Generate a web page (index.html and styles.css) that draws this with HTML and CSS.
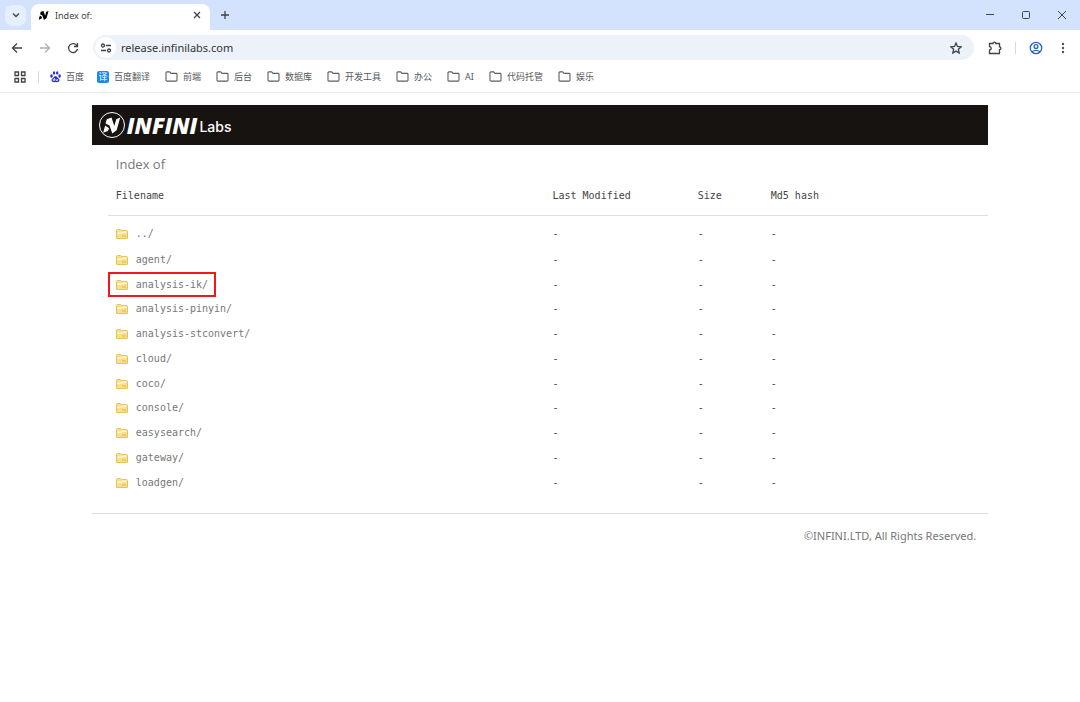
FILE: index.html
```html
<!DOCTYPE html>
<html lang="zh-CN">
<head>
    <meta charset="UTF-8">
    <meta name="viewport" content="width=device-width, initial-scale=1.0">
    <title>Index of:</title>
    <link rel="stylesheet" href="styles.css">
</head>
<body>
    <!-- Shared shapes -->
    <svg class="defs" aria-hidden="true">
        <symbol id="mark" viewBox="0 0 24 24">
            <path d="M1.500 21 4 12 9 15.500 7.500 19zM6 4 12 2 15.500 12.500 18 4 23 2 18.500 18 13 22 9.500 12 4.500 9.500z"/>
        </symbol>
        <symbol id="dir" viewBox="0 0 14 12">
            <path d="M1 10V2q0-1 1-1h3l1.500 1.600H12q1 0 1 1V10q0 1-1 1H2q-1 0-1-1z" fill="none" stroke="#5a5d61" stroke-width="1.200"/>
        </symbol>
        <symbol id="folder" viewBox="0 0 12 10">
            <path d="M.5 9V1.500q0-1 1-1h3l1 1h5q1 0 1 1V9q0 .5-.5.5H1Q.5 9.500.5 9z" fill="#f8df88" stroke="#e6c25c"/>
            <path d="M1.500 3.500h4l1-1h4V4h-4l-1 1h-4z" fill="#fff8dc"/>
            <path d="M6 7h4" stroke="#e0b542"/>
        </symbol>
    </svg>

    <header class="browser">
        <div class="tab-strip">
            <button class="tab-search" aria-label="Search tabs">
                <svg width="8" height="6" viewBox="0 0 8 6"><path d="M1 1.500 4 4.500 7 1.500" class="line"/></svg>
            </button>
            <div class="tab">
                <svg class="favicon" width="11" height="11"><use href="#mark"/></svg>
                <span class="tab-title">Index of:</span>
                <button aria-label="Close tab">
                    <svg width="8" height="8" viewBox="0 0 8 8"><path d="M1 1l6 6M7 1 1 7" class="line"/></svg>
                </button>
            </div>
            <button class="new-tab" aria-label="New tab">
                <svg width="10" height="10" viewBox="0 0 10 10"><path d="M5 1v8M1 5h8" class="line"/></svg>
            </button>
            <div class="window-buttons">
                <button aria-label="Minimize"><svg width="10" height="10" viewBox="0 0 10 10"><path d="M1 4.500h8" class="thin"/></svg></button>
                <button aria-label="Maximize"><svg width="10" height="10" viewBox="0 0 10 10"><rect x="1.500" y="1.500" width="7" height="7" rx="1" class="thin"/></svg></button>
                <button aria-label="Close"><svg width="10" height="10" viewBox="0 0 10 10"><path d="M1 1l8 8M9 1 1 9" class="thin"/></svg></button>
            </div>
        </div>

        <div class="toolbar">
            <button aria-label="Back">
                <svg width="12" height="12" viewBox="0 0 12 12"><path d="M11 6H2M6 1.500 1.500 6 6 10.500" class="line"/></svg>
            </button>
            <button class="disabled" aria-label="Forward">
                <svg width="12" height="12" viewBox="0 0 12 12"><path d="M1 6h9M6 1.500 10.500 6 6 10.500" class="line"/></svg>
            </button>
            <button aria-label="Reload">
                <svg width="12" height="12" viewBox="0 0 12 12"><path d="M10 3.800A4.500 4.500 0 1 0 10.500 7M10.500 1v3.500H7" class="line"/></svg>
            </button>
            <div class="address">
                <button class="site-info" aria-label="Site information">
                    <svg width="12" height="12" viewBox="0 0 12 12"><circle cx="3" cy="3.500" r="1.500" class="line"/><circle cx="9" cy="8.500" r="1.500" class="line"/><path d="M6 3.500h5M1 8.500h5" class="line"/></svg>
                </button>
                <input type="text" aria-label="Address" value="release.infinilabs.com">
                <button aria-label="Bookmark">
                    <svg width="12" height="12" viewBox="0 0 12 12"><path d="M6 1l1.500 3.400 3.700.4-2.800 2.500.8 3.700L6 9.100 2.800 11l.8-3.700L.8 4.800l3.700-.4z" class="line"/></svg>
                </button>
            </div>
            <button aria-label="Extensions">
                <svg width="14" height="14" viewBox="0 0 14 14"><path d="M1.500 2.500H5a1.400 1.400 0 0 1 2.800 0h3.700v3.300a1.400 1.400 0 0 1 0 2.800v3.900h-10V9a1.700 1.700 0 0 0 0-3.400z" class="line"/></svg>
            </button>
            <span class="divider"></span>
            <button class="profile" aria-label="Profile">
                <svg width="14" height="14" viewBox="0 0 14 14"><circle cx="7" cy="7" r="5.700" class="line"/><circle cx="7" cy="5.500" r="1.900" class="line"/><path d="M3 10.800q4-3 8 0" class="line"/></svg>
            </button>
            <button aria-label="Menu">
                <svg width="4" height="12" viewBox="0 0 4 12" fill="#505357"><circle cx="2" cy="2" r="1.200"/><circle cx="2" cy="6" r="1.200"/><circle cx="2" cy="10" r="1.200"/></svg>
            </button>
        </div>

        <nav class="bookmarks">
            <button aria-label="Apps">
                <svg width="12" height="12" viewBox="0 0 12 12"><path d="M1 1h3.500v3.500H1zM7.500 1H11v3.500H7.500zM1 7.500h3.500V11H1zM7.500 7.500H11V11H7.500z" class="line"/></svg>
            </button>
            <span class="divider"></span>
            <a href="#">
                <svg width="11" height="12" viewBox="0 0 11 12" fill="#2b2fd9"><ellipse cx="1.500" cy="5" rx="1.300" ry="1.700"/><ellipse cx="4" cy="2" rx="1.200" ry="1.700"/><ellipse cx="7.200" cy="2" rx="1.200" ry="1.700"/><ellipse cx="9.600" cy="5" rx="1.300" ry="1.700"/><path d="M5.500 5q1.200 0 2 1.500 2.500 2 2 3.300-.8 1.800-4 1.200-3.200.6-4-1.200-.5-1.300 2-3.300.8-1.500 2-1.500z"/><path d="M4.500 7v2.500H3.200V8.300h1.300M6 8v1.500h1.500V8" fill="none" stroke="#fff" stroke-width=".7"/></svg>
                百度
            </a>
            <a href="#"><span class="translate">译</span>百度翻译</a>
            <a href="#"><svg width="13" height="11"><use href="#dir"/></svg>前端</a>
            <a href="#"><svg width="13" height="11"><use href="#dir"/></svg>后台</a>
            <a href="#"><svg width="13" height="11"><use href="#dir"/></svg>数据库</a>
            <a href="#"><svg width="13" height="11"><use href="#dir"/></svg>开发工具</a>
            <a href="#"><svg width="13" height="11"><use href="#dir"/></svg>办公</a>
            <a href="#"><svg width="13" height="11"><use href="#dir"/></svg>AI</a>
            <a href="#"><svg width="13" height="11"><use href="#dir"/></svg>代码托管</a>
            <a href="#"><svg width="13" height="11"><use href="#dir"/></svg>娱乐</a>
        </nav>
    </header>

    <main class="page">
        <a class="logo" href="#">
            <span class="logo-mark"><svg width="19" height="19"><use href="#mark"/></svg></span>
            <span class="logo-name">INFINI</span>
            <span class="logo-sub">Labs</span>
        </a>
        <div class="listing">
            <h1>Index of</h1>
            <table>
                <thead>
                    <tr><th class="name">Filename</th><th class="date">Last Modified</th><th class="size">Size</th><th>Md5 hash</th></tr>
                </thead>
                <tbody>
                    <tr><td><a href="#"><svg width="12" height="10"><use href="#folder"/></svg>../</a></td><td>-</td><td>-</td><td>-</td></tr>
                    <tr><td><a href="#"><svg width="12" height="10"><use href="#folder"/></svg>agent/</a></td><td>-</td><td>-</td><td>-</td></tr>
                    <tr><td><a class="marked" href="#"><svg width="12" height="10"><use href="#folder"/></svg>analysis-ik/</a></td><td>-</td><td>-</td><td>-</td></tr>
                    <tr><td><a href="#"><svg width="12" height="10"><use href="#folder"/></svg>analysis-pinyin/</a></td><td>-</td><td>-</td><td>-</td></tr>
                    <tr><td><a href="#"><svg width="12" height="10"><use href="#folder"/></svg>analysis-stconvert/</a></td><td>-</td><td>-</td><td>-</td></tr>
                    <tr><td><a href="#"><svg width="12" height="10"><use href="#folder"/></svg>cloud/</a></td><td>-</td><td>-</td><td>-</td></tr>
                    <tr><td><a href="#"><svg width="12" height="10"><use href="#folder"/></svg>coco/</a></td><td>-</td><td>-</td><td>-</td></tr>
                    <tr><td><a href="#"><svg width="12" height="10"><use href="#folder"/></svg>console/</a></td><td>-</td><td>-</td><td>-</td></tr>
                    <tr><td><a href="#"><svg width="12" height="10"><use href="#folder"/></svg>easysearch/</a></td><td>-</td><td>-</td><td>-</td></tr>
                    <tr><td><a href="#"><svg width="12" height="10"><use href="#folder"/></svg>gateway/</a></td><td>-</td><td>-</td><td>-</td></tr>
                    <tr><td><a href="#"><svg width="12" height="10"><use href="#folder"/></svg>loadgen/</a></td><td>-</td><td>-</td><td>-</td></tr>
                </tbody>
            </table>
        </div>
        <footer>©INFINI.LTD, All Rights Reserved.</footer>
    </main>
</body>
</html>
```
FILE: styles.css
```css
* {
    box-sizing: border-box;
}
body {
    margin: 0;
    background: #fff;
    color: #444;
    font-family: "Noto Sans", "Noto Sans CJK SC", sans-serif;
}
a {
    color: inherit;
    text-decoration: none;
}
svg {
    display: block;
    flex: none;
}
button {
    display: flex;
    align-items: center;
    justify-content: center;
    flex: none;
    padding: 0;
    border: none;
    background: none;
    color: #3f4246;
    cursor: pointer;
}
.defs {
    position: absolute;
    width: 0;
    height: 0;
}
.line, .thin {
    fill: none;
    stroke: currentColor;
    stroke-width: 1.3;
}
.thin {
    stroke-width: 1;
}

/* Browser bars */
.browser {
    border-bottom: 1px solid #e9ebee;
}
.tab-strip {
    display: flex;
    align-items: center;
    height: 30px;
    padding-left: 5px;
    background: #d3e3fd;
}
.tab-search {
    width: 21px;
    height: 21px;
    border-radius: 7px;
    background: #e6effe;
}
.tab {
    display: flex;
    align-items: center;
    align-self: flex-end;
    width: 179px;
    height: 26px;
    margin-left: 5px;
    padding: 0 9px 4px 7px;
    border-radius: 8px 8px 0 0;
    background: #fff;
    font-size: 9px;
}
.tab-title {
    flex: 1;
    margin-left: 6px;
}
.new-tab {
    margin-left: 10px;
}
.window-buttons {
    display: flex;
    margin-left: auto;
}
.window-buttons button {
    width: 36px;
    height: 30px;
}
.toolbar {
    display: flex;
    align-items: center;
    height: 35px;
    padding: 0 15px 0 11px;
    gap: 16px;
}
.disabled {
    color: #adb0b4;
}
.address {
    display: flex;
    flex: 1;
    align-items: center;
    height: 25px;
    margin: 0 -2px;
    padding: 0 12px 0 2px;
    border-radius: 13px;
    background: #edf2fa;
}
.site-info {
    width: 21px;
    height: 21px;
    border-radius: 50%;
    background: #fff;
}
.address input {
    flex: 1;
    min-width: 0;
    padding: 0 5px;
    border: none;
    outline: none;
    background: none;
    color: #303236;
    font-family: inherit;
    font-size: 11px;
}
.divider {
    width: 1px;
    height: 12px;
    margin: 0 -3px;
    background: #c9daf5;
}
.profile {
    margin-right: 2px;
    color: #2463c9;
}
.bookmarks {
    display: flex;
    align-items: center;
    height: 27px;
    padding: 0 14px 4px;
    gap: 15px;
    color: #55585c;
    font-size: 9px;
    white-space: nowrap;
}
.bookmarks a {
    display: flex;
    align-items: center;
    gap: 5px;
}
.bookmarks .divider {
    margin-right: -4px;
}
.translate {
    width: 12px;
    height: 12px;
    margin: 0 0 0 -2px;
    border-radius: 2px;
    background: #1e86ee;
    color: #fff;
    line-height: 12px;
    text-align: center;
}

/* Directory listing */
.page {
    width: 83%;
    margin: 12px auto 0;
}
.logo {
    display: flex;
    align-items: center;
    height: 40px;
    padding-left: 7px;
    background: #171311;
    color: #fff;
}
.logo-mark {
    display: flex;
    align-items: center;
    justify-content: center;
    width: 26px;
    height: 26px;
    border: 1px solid #fff;
    border-radius: 50%;
    fill: #fff;
}
.logo-name {
    margin-left: 2px;
    font: italic 800 22px/40px "Open Sans", sans-serif;
}
.logo-sub {
    margin-left: 2px;
    padding-top: 4px;
    font: 500 14px/20px Inter, sans-serif;
}
.listing {
    margin-left: 16px;
}
h1 {
    margin: 0;
    padding: 10px 8px 2px;
    color: #777;
    font-family: "Open Sans", sans-serif;
    font-size: 13px;
    font-weight: 400;
    line-height: 18px;
}
table {
    width: 100%;
    height: 320px;
    table-layout: fixed;
    border-collapse: collapse;
    font: 10px/12px "DejaVu Sans Mono", monospace;
}
th, td {
    padding: 0 8px;
    text-align: left;
}
th {
    height: 40px;
    padding-top: 3px;
    border-bottom: 1px solid #ddd;
    font-weight: 400;
}
td:first-child {
    padding: 0 2px;
}
tbody tr:first-child td {
    padding-top: 6px;
}
.name {
    width: 49.6%;
}
.date {
    width: 16.5%;
}
.size {
    width: 8.3%;
}
td a {
    display: inline-flex;
    align-items: center;
    gap: 8px;
    height: 21px;
    padding: 0 6px;
    color: #777;
    vertical-align: middle;
}
.marked {
    outline: 2px solid #f01818;
}
footer {
    margin-top: 18px;
    padding: 14px 12px;
    border-top: 1px solid #ddd;
    color: #777;
    font-size: 11px;
    line-height: 16px;
    text-align: right;
}
```
